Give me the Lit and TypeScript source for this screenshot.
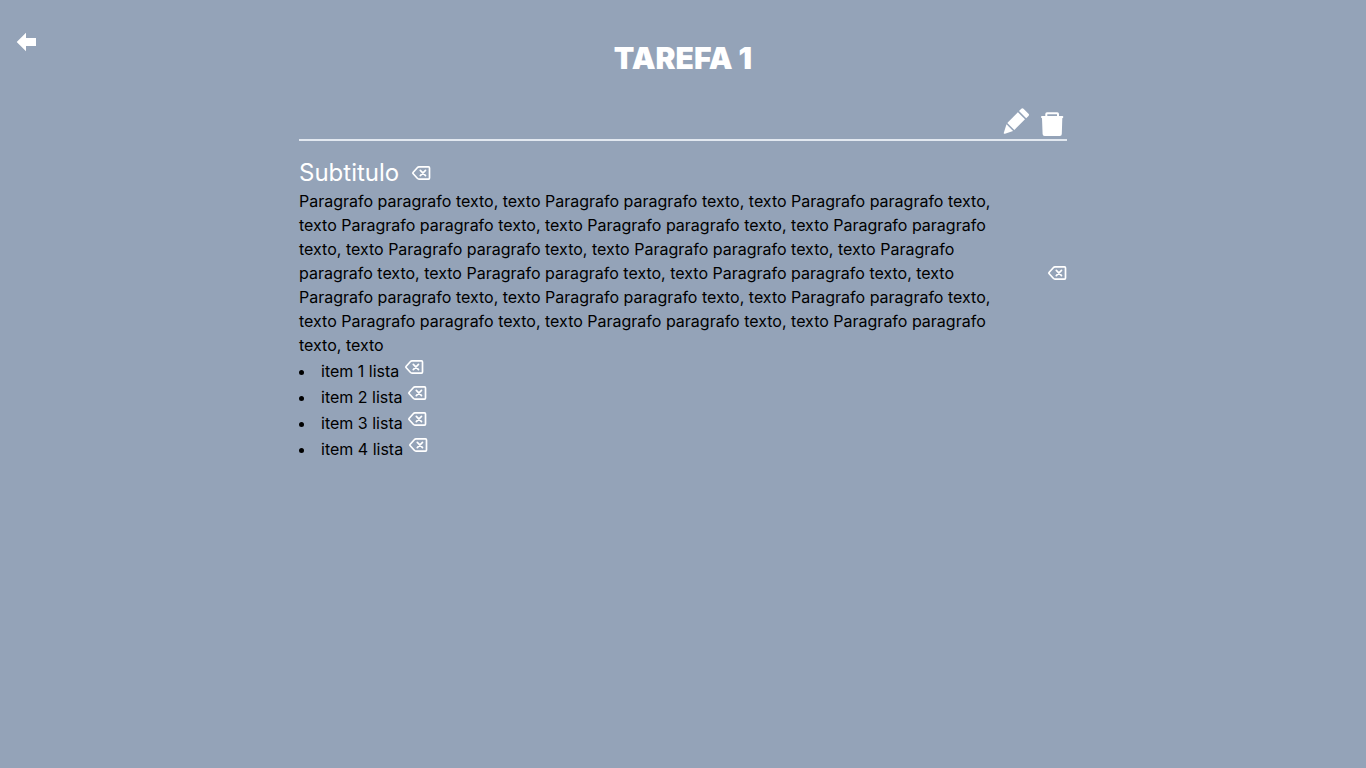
import { LitElement, html, css } from "lit";
import { customElement, property, state } from "lit/decorators.js";

@customElement("delete-icon")
class DeleteIcon extends LitElement {
  @property() label = "Apagar";
  @property({ type: Boolean, reflect: true }) block = false;

  static styles = css`
    :host {
      display: inline;
    }
    :host([block]) {
      display: block;
    }
    .button {
      display: inline;
      padding: 0;
      border: 0;
      background: none;
      color: #fff;
      font: inherit;
      cursor: pointer;
    }
    :host([block]) .button,
    :host([block]) .icon {
      display: block;
    }
    .icon {
      width: 20px;
      height: 20px;
      fill: none;
      stroke: currentColor;
      stroke-width: 1.7;
      stroke-linecap: round;
      stroke-linejoin: round;
    }
  `;

  render() {
    return html`<button class="button" type="button" aria-label=${this.label}><svg class="icon" viewBox="0 0 20 20" aria-hidden="true">
      <path d="M17.5 3.9a1 1 0 0 1 1 1v10.2a1 1 0 0 1-1 1H8q-1 0-1.700-.8L2 10.500q-.5-.5 0-1L6.300 4.700Q7 3.900 8 3.900z" />
      <path d="M9.300 7.400l5.200 5.200m0-5.200l-5.200 5.200" />
    </svg></button>`;
  }
}

@customElement("app-root")
class AppRoot extends LitElement {
  @state() private items = ["item 1 lista", "item 2 lista", "item 3 lista", "item 4 lista"];

  static styles = css`
    :host {
      display: block;
      box-sizing: border-box;
      min-height: 100vh;
      background: #94a3b8;
      color: #000;
      font: 400 16px/24px Inter, "Liberation Sans", sans-serif;
    }
    .page {
      display: grid;
      grid-template-columns: 1fr minmax(0, 768px) 1fr;
      padding: 32px 16px;
    }
    .back {
      justify-self: start;
      align-self: start;
      display: flex;
      color: #fff;
    }
    .content {
      padding-top: 8px;
    }
    .title {
      margin: 0 0 32px;
      color: #fff;
      font-size: 30px;
      line-height: 36px;
      font-weight: 900;
      text-align: center;
      text-transform: uppercase;
    }
    .toolbar {
      display: flex;
      justify-content: flex-end;
      gap: 9px;
      padding: 0 3px 3px;
      margin-bottom: 16px;
      border-bottom: 2px solid #e2e8f0;
    }
    .tool {
      display: flex;
      padding: 0;
      border: 0;
      background: none;
      color: #fff;
      cursor: pointer;
    }
    .tool.trash {
      align-self: flex-end;
    }
    .glyph {
      display: block;
      fill: currentColor;
    }
    .heading {
      display: flex;
      align-items: center;
      gap: 12px;
    }
    .subtitle {
      margin: 0;
      color: #fff;
      font-size: 24px;
      line-height: 32px;
      font-weight: 400;
    }
    .paragraph {
      display: flex;
      align-items: center;
      justify-content: space-between;
      gap: 32px;
    }
    .text {
      margin: 0;
    }
    .list {
      margin: 0;
      padding: 0;
      list-style: disc inside;
    }
  `;

  private paragraph = Array(17).fill("Paragrafo paragrafo texto, texto").join(" ");

  render() {
    return html`
      <main class="page">
        <a class="back" href="#" aria-label="Voltar">
          <svg class="glyph" width="20" height="20" viewBox="0 0 20 20" aria-hidden="true">
            <path d="M.7 10L10 .8V6h10v8H10v5.2z" />
          </svg>
        </a>
        <section class="content">
          <h1 class="title">Tarefa 1</h1>
          <div class="toolbar">
            <button class="tool" type="button" aria-label="Editar">
              <svg class="glyph" width="28" height="28" viewBox="0 0 28 28" aria-hidden="true">
                <path d="M16 3l2.300-2.300q1.100-1.100 2.200 0l5 5q1.100 1.100 0 2.200L23.200 10.200z" />
                <path d="M14.900 4.200l7.100 7.100L11.300 22l-7-7.100z" />
                <path d="M3.500 16.300l6.600 6.600L2 25.700q-1.600.5-1.200-1z" />
              </svg>
            </button>
            <button class="tool trash" type="button" aria-label="Excluir">
              <svg class="glyph" width="24" height="24" viewBox="0 0 24 24" aria-hidden="true">
                <path fill-rule="evenodd" d="M7 .2h10.300q1.700 0 1.700 1.700V4h3.300q1 0 1 1.100t-1 1.200L21.800 22q0 2-2 2H4.600q-2 0-2-2L2 6.300Q1 6.200 1 5.100T2 4h3.300V1.900Q5.300.2 7 .2zM7.300 2.200V4h9.700V2.200z" />
              </svg>
            </button>
          </div>
          <div class="heading">
            <h2 class="subtitle">Subtitulo</h2>
            <delete-icon block label="Apagar subtitulo"></delete-icon>
          </div>
          <div class="paragraph">
            <p class="text">${this.paragraph}</p>
            <delete-icon block label="Apagar paragrafo"></delete-icon>
          </div>
          <ul class="list">
            ${this.items.map((item) => html`<li>${item} <delete-icon label=${`Apagar ${item}`}></delete-icon></li>`)}
          </ul>
        </section>
      </main>
    `;
  }
}
